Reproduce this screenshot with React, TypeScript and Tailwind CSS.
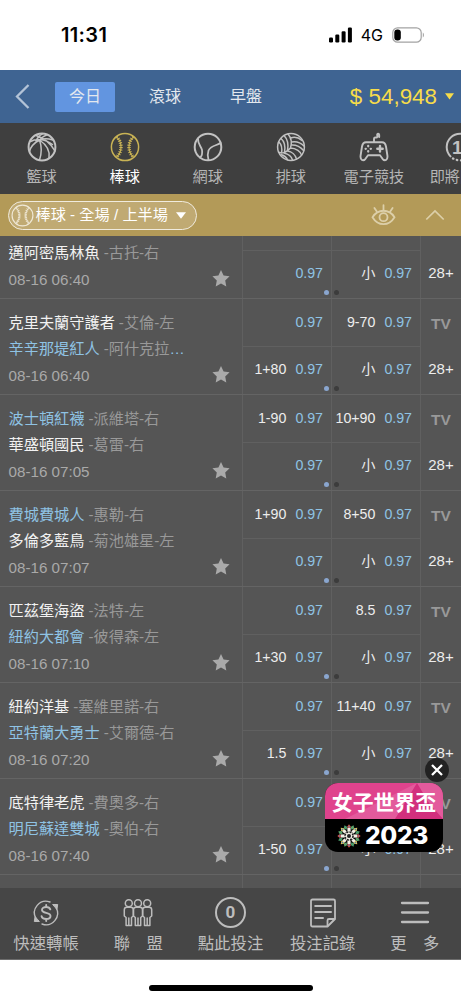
import React from "react";
import clsx from "clsx";

interface Team {
  name: string;
  pitcher: string;
  favorite?: boolean;
  truncated?: boolean;
}

interface Match {
  id: number;
  home?: Team;
  away: Team;
  time: string;
  // handicap labels, upper and lower row
  handicap: [string, string];
  total: string;
}

const MATCHES: Match[] = [
  {
    id: 1,
    away: { name: "邁阿密馬林魚", pitcher: "古托-右" },
    time: "08-16 06:40",
    handicap: ["", ""],
    total: "",
  },
  {
    id: 2,
    home: { name: "克里夫蘭守護者", pitcher: "艾倫-左" },
    away: { name: "辛辛那堤紅人", pitcher: "阿什克拉", favorite: true, truncated: true },
    time: "08-16 06:40",
    handicap: ["", "1+80"],
    total: "9-70",
  },
  {
    id: 3,
    home: { name: "波士頓紅襪", pitcher: "派維塔-右", favorite: true },
    away: { name: "華盛頓國民", pitcher: "葛雷-右" },
    time: "08-16 07:05",
    handicap: ["1-90", ""],
    total: "10+90",
  },
  {
    id: 4,
    home: { name: "費城費城人", pitcher: "惠勒-右", favorite: true },
    away: { name: "多倫多藍鳥", pitcher: "菊池雄星-左" },
    time: "08-16 07:07",
    handicap: ["1+90", ""],
    total: "8+50",
  },
  {
    id: 5,
    home: { name: "匹茲堡海盜", pitcher: "法特-左" },
    away: { name: "紐約大都會", pitcher: "彼得森-左", favorite: true },
    time: "08-16 07:10",
    handicap: ["", "1+30"],
    total: "8.5",
  },
  {
    id: 6,
    home: { name: "紐約洋基", pitcher: "塞維里諾-右" },
    away: { name: "亞特蘭大勇士", pitcher: "艾爾德-右", favorite: true },
    time: "08-16 07:20",
    handicap: ["", "1.5"],
    total: "11+40",
  },
  {
    id: 7,
    home: { name: "底特律老虎", pitcher: "費奧多-右" },
    away: { name: "明尼蘇達雙城", pitcher: "奧伯-右", favorite: true },
    time: "08-16 07:40",
    handicap: ["", "1-50"],
    total: "",
  },
];

const iconProps = {
  viewBox: "0 0 30 30",
  fill: "none",
  stroke: "currentColor",
  strokeLinecap: "round",
  strokeLinejoin: "round",
} as const;

function BasketballIcon() {
  return (
    <svg {...iconProps} strokeWidth="1.5" className="size-[30px]">
      <circle cx="15" cy="15" r="13.4" strokeWidth="2" />
      <path d="M3.5 9.5C8 7 17 6 25.5 12.5M9 3.5C17 6 24 12 28 19M12.5 8C7 11 3.5 15 2.5 19.5M12.5 8C15 5.5 18 3.5 20 2.8M12.5 8C15 15 14.5 22 12.5 28M12.5 8C20 13 23 20 22 26M26 8C21 6.5 16 6.5 12.5 8M15.5 1.8C12 3.5 10 6 9 9" />
    </svg>
  );
}

function BaseballIcon({ className = "size-[30px]" }: { className?: string }) {
  return (
    <svg {...iconProps} className={className}>
      <circle cx="15" cy="15" r="13.6" strokeWidth="1.5" />
      <path d="M6.5 4.8C12.5 10 12.5 20 6.5 25.2M23.5 4.8C17.5 10 17.5 20 23.5 25.2" strokeWidth="1.1" />
      <path
        d="M6.5 4.8C12.5 10 12.5 20 6.5 25.2M23.5 4.8C17.5 10 17.5 20 23.5 25.2"
        strokeWidth="3.4"
        strokeLinecap="butt"
        strokeDasharray="1 1.3"
      />
    </svg>
  );
}

function TennisIcon() {
  return (
    <svg {...iconProps} strokeWidth="1.8" className="size-[30px]">
      <circle cx="15" cy="15" r="13.3" strokeWidth="2" />
      <path d="M5 6.5C4.6 12 8 14 9 18C9.6 21.5 9 24 7 25.6M27.5 11C25 13.5 18 13 15.5 18.5C14.3 22 14.5 25 15.5 28" />
    </svg>
  );
}

function VolleyballIcon() {
  return (
    <svg {...iconProps} strokeWidth="1.5" className="size-[30px]">
      <circle cx="15" cy="15" r="13.4" />
      <path d="M14.5 16C16 11 15.5 6 12 2M14.5 16C10 21 5 22 2.5 20M14.5 16C20 16 25 20 25.5 23M15.5 10C20 9 25 11 28 14M14.8 6C19 4.5 23 6 26 8.5M15.5 13C20 12.8 25 15.5 27.6 18.5M11.5 18.5C12.5 13 11.5 7 8 3.5M8.5 20C9.5 14 8 9 5 6.5M5.5 21C6.5 15.5 5 12 3 10M11.5 19C16 19.5 19.5 23 20.5 27M8.5 21.3C12.5 22 15.5 25 16.5 28M5.5 22.8C8 23.5 10.5 25.5 11.5 27.8" />
    </svg>
  );
}

function GamepadIcon() {
  return (
    <svg {...iconProps} strokeWidth="1.9" className="size-[30px]">
      <path d="M15 10V7C15 5.5 16 5.5 17.2 5.6C18.4 5.7 18.4 4.6 18.2 3C18 1.4 20 1.4 20.2 2.8V5" />
      <path d="M7 10.3H23C25.5 10.3 26.5 12 27 14.5L28.4 23.5C29 28.3 25.8 29.6 23.5 26.8L21 23.3H9L6.5 26.8C4.2 29.6 1 28.3 1.6 23.5L3 14.5C3.5 12 4.5 10.3 7 10.3Z" />
      <path d="M9.2 14V14.3M9.2 19.2V19.5M6.6 16.8H6.8M11.7 16.8H11.9" strokeWidth="2.3" />
      <path d="M21 14V19.5M18.3 16.8H23.7" strokeWidth="2.4" />
    </svg>
  );
}

function UpcomingIcon() {
  return (
    <svg {...iconProps} strokeWidth="2" className="size-[30px]">
      <path d="M5.5 24.4A13.3 13.3 0 1 1 24.5 24.4" />
      <path d="M8 26.4A13.3 13.3 0 0 0 22 26.4" strokeDasharray="0.5 3.6" strokeWidth="2.3" />
      <text x="7" y="21.5" fontSize="19" fontWeight="700" fill="currentColor" stroke="none" className="font-['Liberation_Sans',sans-serif]">
        1
      </text>
    </svg>
  );
}

const SPORTS = [
  { label: "籃球", icon: <BasketballIcon /> },
  { label: "棒球", icon: <BaseballIcon />, active: true },
  { label: "網球", icon: <TennisIcon /> },
  { label: "排球", icon: <VolleyballIcon /> },
  { label: "電子競技", icon: <GamepadIcon /> },
  { label: "即將開賽", icon: <UpcomingIcon /> },
];

function StatusBar() {
  return (
    <div className="flex h-[70px] shrink-0 items-center bg-white pr-[36px] pl-[61px] text-black">
      <span className="font-['Inter',sans-serif] text-[20px] leading-none font-semibold tracking-[0.35px]">
        11:31
      </span>
      <div className="ml-auto flex items-center">
        <svg viewBox="0 0 24 16" className="h-4 w-6" fill="currentColor">
          <rect x="0" y="10.5" width="4" height="5" rx="1.2" />
          <rect x="6.3" y="7.5" width="4" height="8" rx="1.2" />
          <rect x="12.6" y="4.2" width="4" height="11.3" rx="1.2" />
          <rect x="18.9" y="0.5" width="4" height="15" rx="1.2" />
        </svg>
        <span className="ml-2 font-['Inter',sans-serif] text-[16px] leading-none">4G</span>
        <svg viewBox="0 0 33 16" className="ml-[9px] h-4 w-[33px]">
          <rect x="0.8" y="0.8" width="28.4" height="14.4" rx="4.8" fill="none" stroke="#a3a3a3" strokeWidth="1.2" />
          <rect x="2.3" y="2.5" width="6.5" height="11" rx="3" fill="#000" />
          <path d="M30.8 5.5C32.3 6.2 32.3 9.8 30.8 10.5Z" fill="#a3a3a3" />
        </svg>
      </div>
    </div>
  );
}

function Header() {
  return (
    <header className="flex h-[53px] shrink-0 items-center bg-[#3f6492] pr-[7px] pl-[15px] text-[16px] text-[#e3e8ee]">
      <svg viewBox="0 0 15 25" className="h-[25px] w-[15px]" fill="none" stroke="#b3c3d7" strokeWidth="2.3">
        <path d="M13.5 1L2 12.5L13.5 24" />
      </svg>
      <button className="ml-[25px] h-[30px] w-[60px] rounded-[2px] bg-[#6295e0]">今日</button>
      <button className="ml-[34px]">滾球</button>
      <button className="ml-[49px]">早盤</button>
      <div className="ml-auto flex items-center text-[#f7dc4a]">
        <span className="text-[22.4px] whitespace-nowrap">$ 54,948</span>
        <svg viewBox="0 0 9 7" className="ml-2 h-[7px] w-[9px]" fill="currentColor">
          <path d="M0 0.3H9L4.5 6.5Z" />
        </svg>
      </div>
    </header>
  );
}

function SportTabs() {
  return (
    <nav className="flex h-[71px] shrink-0 overflow-hidden bg-[#3f3f3f]">
      {SPORTS.map((sport) => (
        <div
          key={sport.label}
          className={clsx(
            "flex w-[83.1px] shrink-0 flex-col items-center pt-[9px] last:ml-[3px]",
            sport.active ? "text-[#c9b355]" : "text-[#c2c2c2]"
          )}
        >
          {sport.icon}
          <span
            className={clsx(
              "mt-1 text-[15.2px] leading-[22px] whitespace-nowrap",
              sport.active ? "text-white" : "text-[#b5b5b5]"
            )}
          >
            {sport.label}
          </span>
        </div>
      ))}
    </nav>
  );
}

function FilterBar() {
  return (
    <div className="flex h-[42px] shrink-0 items-center bg-[#b39a58] pr-[16px] pl-2">
      <button className="flex h-[29px] w-[189px] items-center rounded-full border-[1.5px] border-[#f0ebde] bg-[#c0aa73] pl-[2px] text-[15.2px] whitespace-nowrap text-white">
        <BaseballIcon className="size-[23px] shrink-0 text-[#efe8d6]" />
        <span className="ml-[1.5px]">棒球 - 全場 / 上半場</span>
        <svg viewBox="0 0 10 7" className="ml-[8px] h-[7px] w-[10px] shrink-0" fill="currentColor">
          <path d="M0 0.3H10L5 6.7Z" />
        </svg>
      </button>
      <svg viewBox="0 0 25 22" className="ml-auto h-[22px] w-[25px]" fill="none" stroke="#dccfa9" strokeWidth="1.8" strokeLinecap="round">
        <path d="M1.5 13.2C7 4.6 18 4.6 23.5 13.2C18 22.4 7 22.4 1.5 13.2Z" />
        <circle cx="12.5" cy="13.2" r="4" />
        <path d="M12.5 1.2V5.5M3.4 4L5.8 7.5M21.6 4L19.2 7.5" />
      </svg>
      <svg viewBox="0 0 20 12" className="ml-[29px] h-3 w-5" fill="none" stroke="#dccfa9" strokeWidth="1.7">
        <path d="M1.3 10.5L10 2L18.7 10.5" />
      </svg>
    </div>
  );
}

function TeamName({ team }: { team?: Team }) {
  if (!team) return <div className="h-[26px]" />;
  return (
    <div className={clsx("h-[26px] leading-[26px] whitespace-nowrap", team.favorite ? "text-[#8fc3e4]" : "text-[#f2f2f2]")}>
      {team.name}
      <span className="ml-1 text-[#999]">-{team.pitcher}</span>
      {team.truncated && "…"}
    </div>
  );
}

function OddsCell({ label, dot }: { label: string; dot?: "left" | "right" }) {
  return (
    <div
      className={clsx(
        "relative flex h-full items-center justify-end pr-[8px] text-[14.2px] whitespace-nowrap",
        dot && "pb-[2px]"
      )}
    >
      <span className="text-[#ededed]">{label}</span>
      <span className="ml-[9px] text-[#8fc3e4]">0.97</span>
      {dot === "left" && <i className="absolute right-[2.5px] bottom-[3.5px] size-[5px] rounded-full bg-[#8aa6cf]" />}
      {dot === "right" && <i className="absolute bottom-[3.5px] left-[2px] size-[5px] rounded-full bg-[#3c3c3c]" />}
    </div>
  );
}

function MatchRow({ match }: { match: Match }) {
  return (
    <div className="flex h-24 shrink-0 border-b border-[#646464]">
      <div className="flex w-[242px] shrink-0 flex-col pt-[11px] pl-[8.5px] text-[15.2px]">
        <TeamName team={match.home} />
        <TeamName team={match.away} />
        <div className="flex items-center pr-[12px] text-[#a9a9a9]">
          <span className="leading-[27px]">{match.time}</span>
          <svg viewBox="0 0 18 17" className="-mt-[2px] ml-auto h-[17px] w-[18px]" fill="#aaa">
            <path d="M9 0L11.6 5.5L17.6 6.3L13.2 10.5L14.3 16.5L9 13.6L3.7 16.5L4.8 10.5L0.4 6.3L6.4 5.5Z" />
          </svg>
        </div>
      </div>
      <div className="grid w-[89px] shrink-0 grid-rows-[48px_47px] border-l border-[#606060]">
        <div className="border-b border-[#606060]">
          <OddsCell label={match.handicap[0]} />
        </div>
        <OddsCell label={match.handicap[1]} dot="left" />
      </div>
      <div className="grid w-[89px] shrink-0 grid-rows-[48px_47px] border-l border-[#606060]">
        <div className="border-b border-[#606060]">
          <OddsCell label={match.total} />
        </div>
        <OddsCell label="小" dot="right" />
      </div>
      <div className="grid flex-1 grid-rows-[48px_47px] items-center border-l border-[#606060] text-center">
        <span className="pt-[2px] text-[15.5px] font-bold text-[#999]">TV</span>
        <span className="pb-[2px] text-[15px] text-[#ededed]">28+</span>
      </div>
    </div>
  );
}

function TransferIcon() {
  return (
    <svg {...iconProps} strokeWidth="1.4" className="size-[30px]">
      <path d="M19 4A11.5 11.5 0 0 0 5 20.5M11 26A11.5 11.5 0 0 0 25 9.5" />
      <path d="M22 6.5H26.7L26 11ZM8 23.5H3.3L4 19Z" fill="currentColor" strokeWidth="1" />
      <path d="M19.3 11.3C18.6 9.4 16.9 9 15.2 9C12.8 9 11 10 11 12C11 16 19.5 13.8 19.5 18C19.5 20.2 17.5 21 15.2 21C13 21 11 20.3 10.6 18.3M15.2 7V9M15.2 21V23" strokeWidth="1.9" />
    </svg>
  );
}

function AllianceIcon() {
  return (
    <svg {...iconProps} strokeWidth="1.5" className="size-[30px]">
      {[5.8, 15, 24.2].map((cx) => (
        <g key={cx} transform={`translate(${cx} 0)`}>
          <circle cx="0" cy="5.2" r="3.5" />
          <path d="M-2.7 19.5L-4.5 18V11.8C-4.5 10 -3.5 9.2 -2 9.2H2C3.5 9.2 4.5 10 4.5 11.8V18L2.7 19.5V27.6H-2.7ZM0 20V27.6" />
        </g>
      ))}
    </svg>
  );
}

function BetSlipIcon() {
  return (
    <div className="flex size-[31px] items-center justify-center rounded-full border-2 border-[#bdbdbd] font-['Roboto',sans-serif] text-[17px] leading-none font-bold">
      0
    </div>
  );
}

function RecordIcon() {
  return (
    <svg {...iconProps} strokeWidth="1.8" className="size-[30px]">
      <path d="M4.5 1.5H25.5Q27 1.5 27 3V21L19.5 28.5H4.5Q3 28.5 3 27V3Q3 1.5 4.5 1.5Z" />
      <path d="M19.5 28V22.5Q19.5 21 21 21H26.5" />
      <path d="M7.2 8H23M7.2 14H23M7.2 20H15" strokeWidth="2" />
    </svg>
  );
}

function MenuIcon() {
  return (
    <svg {...iconProps} strokeWidth="2.3" className="size-[30px]">
      <path d="M2 5H28M2 14.5H28M2 24H28" />
    </svg>
  );
}

const NAV_ITEMS = [
  { label: "快速轉帳", icon: <TransferIcon /> },
  { label: "聯　盟", icon: <AllianceIcon /> },
  { label: "點此投注", icon: <BetSlipIcon /> },
  { label: "投注記錄", icon: <RecordIcon /> },
  { label: "更　多", icon: <MenuIcon /> },
];

function BottomNav() {
  return (
    <nav className="flex h-[72px] shrink-0 border-b border-[#6d6d6d] bg-[#464646] text-[#bdbdbd]">
      {NAV_ITEMS.map((item) => (
        <div key={item.label} className="flex flex-1 flex-col items-center pt-[9px]">
          <div className="flex h-[31px] items-center">{item.icon}</div>
          <span className="mt-[3px] text-[16.4px] leading-[24px] whitespace-nowrap">{item.label}</span>
        </div>
      ))}
    </nav>
  );
}

const PETALS = ["#d9534a", "#5aa36b", "#e6c65c", "#4b9a6a"];

function PromoBadge() {
  return (
    <div className="absolute top-[783px] left-[325px] h-[69px] w-[118px]">
      <div className="h-full overflow-hidden rounded-[13px] bg-black">
        <div className="relative flex h-[36px] items-center justify-center bg-[#df438d] text-white">
          <svg viewBox="0 0 118 36" className="absolute inset-0 h-full w-full">
            <path d="M20 36L92 0H118V36Z" fill="#e35a9c" />
            <path d="M70 36L92 0L104 20L118 36Z" fill="#d22f7d" />
          </svg>
          <span className="relative pt-[5px] text-[20.9px] leading-none font-bold whitespace-nowrap">女子世界盃</span>
        </div>
        <div className="flex h-[33px] items-center pl-[12px]">
          <svg viewBox="-12 -12 24 24" className="size-6 shrink-0">
            {Array.from({ length: 16 }, (_, i) => (
              <g key={i} transform={`rotate(${i * 22.5})`}>
                <path d="M0 -11.7L2 -9L0 -6.8L-2 -9Z" fill={PETALS[i % 4]} />
              </g>
            ))}
            {Array.from({ length: 8 }, (_, i) => (
              <g key={i} transform={`rotate(${i * 45})`}>
                <rect x="-1.6" y="-8" width="3.2" height="3" fill="#f3efe4" />
                <circle cx="0" cy="-9.3" r="0.8" fill="#4b83b8" />
              </g>
            ))}
            <circle r="5" fill="#f3efe4" />
            <circle r="4" fill="none" stroke="#222" strokeWidth="1.6" strokeDasharray="2 1.14" />
            <circle r="2" fill="#222" />
          </svg>
          <span className="ml-[4px] font-['Inter',sans-serif] text-[24.5px] leading-none font-extrabold tracking-[-0.3px] text-white">
            2023
          </span>
        </div>
      </div>
      <button className="absolute -top-[25px] right-[-6px] flex size-6 items-center justify-center rounded-full bg-[#222]">
        <svg viewBox="0 0 12 12" className="size-3" stroke="#fff" strokeWidth="2.3">
          <path d="M1 1L11 11M11 1L1 11" />
        </svg>
      </button>
    </div>
  );
}

export default function App() {
  return (
    <div className="relative flex h-[1000px] w-[461px] flex-col overflow-hidden bg-white font-['Liberation_Sans','Noto_Sans_CJK_TC',sans-serif]">
      <StatusBar />
      <Header />
      <SportTabs />
      <FilterBar />
      <main className="flex h-[652px] shrink-0 flex-col overflow-hidden bg-[#555]">
        {/* list is scrolled so the first match is cut off by the filter bar */}
        <div className="-mt-[33px] flex shrink-0 flex-col">
          {MATCHES.map((match) => (
            <MatchRow key={match.id} match={match} />
          ))}
          <div className="flex h-24 shrink-0">
            <div className="w-[242px]" />
            <div className="w-[89px] border-l border-[#606060]" />
            <div className="w-[89px] border-l border-[#606060]" />
            <div className="flex-1 border-l border-[#606060]" />
          </div>
        </div>
      </main>
      <BottomNav />
      <div className="flex flex-1 justify-center pt-[25px]">
        <div className="h-[6px] w-[164px] rounded-full bg-black" />
      </div>
      <PromoBadge />
    </div>
  );
}
